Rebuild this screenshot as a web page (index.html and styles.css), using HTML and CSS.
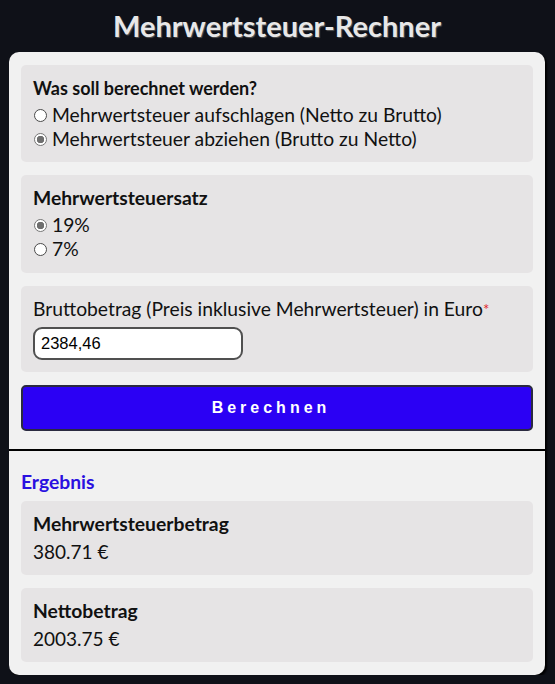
FILE: index.html
```html
<!DOCTYPE html>
<html lang="de">
<head>
<meta charset="utf-8">
<title>Mehrwertsteuer-Rechner</title>
<link rel="stylesheet" href="styles.css">
</head>
<body>
<h1 class="title">Mehrwertsteuer-Rechner</h1>
<main class="card">
  <form class="form">
    <fieldset class="box">
      <div class="box-head box-head-sm">Was soll berechnet werden?</div>
      <label class="opt"><input type="radio" name="mode" class="radio"> Mehrwertsteuer aufschlagen (Netto zu Brutto)</label>
      <label class="opt"><input type="radio" name="mode" class="radio" checked> Mehrwertsteuer abziehen (Brutto zu Netto)</label>
    </fieldset>
    <fieldset class="box box-rate">
      <div class="box-head">Mehrwertsteuersatz</div>
      <label class="opt"><input type="radio" name="rate" class="radio" checked> 19%</label>
      <label class="opt"><input type="radio" name="rate" class="radio"> 7%</label>
    </fieldset>
    <div class="box box-input">
      <label class="field-label" for="amount">Bruttobetrag (Preis inklusive Mehrwertsteuer) in Euro<span class="req">*</span></label>
      <input id="amount" class="amount" type="text" value="2384,46">
    </div>
    <button type="button" class="btn">Berechnen</button>
  </form>
  <section class="result">
    <h2 class="result-title">Ergebnis</h2>
    <div class="box res-box">
      <div class="box-head">Mehrwertsteuerbetrag</div>
      <div class="res-val">380.71 €</div>
    </div>
    <div class="box res-box">
      <div class="box-head">Nettobetrag</div>
      <div class="res-val">2003.75 €</div>
    </div>
  </section>
</main>
</body>
</html>
```
FILE: styles.css
```css
* { box-sizing: border-box; }
html, body { margin: 0; padding: 0; }
body {
  background: #0f1118;
  font-family: Lato, "Open Sans", sans-serif;
  color: #111;
  padding: 0 10px 0 9px;
}
.title {
  margin: 0;
  height: 52px;
  padding-top: 8px;
  text-align: center;
  font-size: 29px;
  line-height: 36px;
  font-weight: 700;
  color: #e8e8e8;
  text-shadow: 1px 1px 1px #555;
}
.card {
  background: #f1f1f1;
  border-radius: 10px;
  box-shadow: 2px 2px 2px #000;
}
.form {
  padding: 13px 12px 18px;
  display: flex;
  flex-direction: column;
  gap: 13px;
}
.box {
  margin: 0;
  border: 0;
  background: #e6e4e5;
  border-radius: 5px;
  padding: 11px 12px 11px;
  display: flex;
  flex-direction: column;
  min-width: 0;
}
.box-rate { padding-bottom: 12px; }
.box-head {
  font-size: 19.3px;
  font-weight: 700;
  line-height: 24px;
  margin-bottom: 3px;
}
.box-head-sm { font-size: 18px; }
.opt {
  font-size: 19.3px;
  line-height: 24px;
  display: flex;
  align-items: center;
  gap: 5px;
}
.radio {
  appearance: none;
  -webkit-appearance: none;
  margin: 0 0 0 1px;
  width: 13px;
  height: 13px;
  border-radius: 50%;
  border: 1px solid #4a4a4a;
  background: #fff;
  flex: none;
}
.radio:checked {
  border-color: #777;
  background: radial-gradient(circle, #6f6f6f 0 3.5px, #fff 4px);
}
.box-input { padding-bottom: 12px; gap: 6px; }
.field-label {
  font-size: 19.3px;
  line-height: 24px;
}
.req { color: #e0262b; font-size: 15px; vertical-align: top; }
.amount {
  width: 210px;
  height: 33px;
  border: 2px solid #505050;
  border-radius: 9px;
  background: #fff;
  font-family: "Liberation Sans", Arial, sans-serif;
  font-size: 16.5px;
  padding: 0 6px;
  color: #000;
}
.btn {
  height: 46px;
  background: #2b00f4;
  border: 2px solid #2a2a40;
  border-radius: 5px;
  color: #fff;
  font-family: "Liberation Sans", Arial, sans-serif;
  font-size: 16px;
  font-weight: 700;
  letter-spacing: 4px;
  padding: 0 12px 0 0;
}
.result {
  border-top: 2px solid #000;
  padding: 17px 12px 13px;
  display: flex;
  flex-direction: column;
  gap: 13px;
}
.result-title {
  margin: 0 0 -8px;
  font-size: 19.3px;
  line-height: 28px;
  font-weight: 700;
  color: #2a10e0;
}
.res-box { padding: 11px 12px 11px; }
.res-val {
  font-size: 19px;
  line-height: 24px;
  margin-top: 1px;
}
```
